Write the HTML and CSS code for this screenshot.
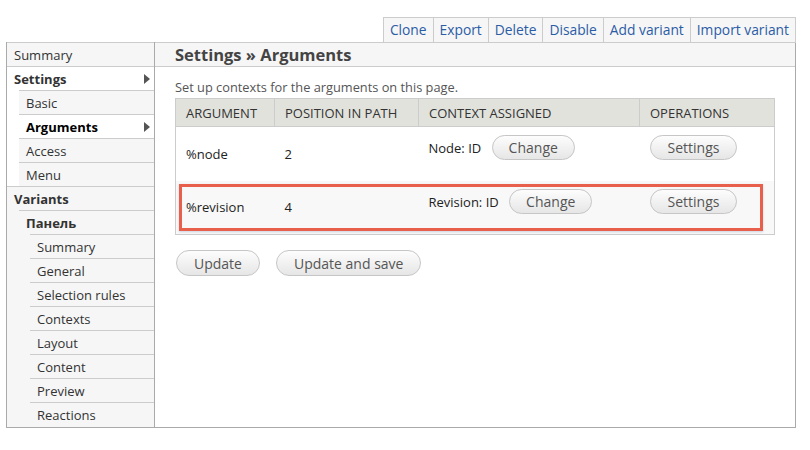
FILE: index.html
```html
<!DOCTYPE html>
<html lang="en">
<head>
<meta charset="UTF-8">
<title>Settings » Arguments</title>
<link rel="stylesheet" href="styles.css">
</head>
<body>
    <div class="page">
        <div class="tabs">
            <a class="tab" href="#">Clone</a>
            <a class="tab" href="#">Export</a>
            <a class="tab" href="#">Delete</a>
            <a class="tab" href="#">Disable</a>
            <a class="tab" href="#">Add variant</a>
            <a class="tab" href="#">Import variant</a>
        </div>
        <div class="layout">
            <ul class="nav">
                <li><a href="#">Summary</a></li>
                <li class="active"><a href="#" class="bold">Settings<span class="arrow"></span></a>
                    <ul>
                        <li><a href="#">Basic</a></li>
                        <li class="active"><a href="#" class="bold current">Arguments<span class="arrow"></span></a></li>
                        <li><a href="#">Access</a></li>
                        <li><a href="#">Menu</a></li>
                    </ul>
                </li>
                <li><a href="#" class="bold">Variants</a>
                    <ul>
                        <li><a href="#" class="bold">Панель</a>
                            <ul class="deep">
                                <li><a href="#">Summary</a></li>
                                <li><a href="#">General</a></li>
                                <li><a href="#">Selection rules</a></li>
                                <li><a href="#">Contexts</a></li>
                                <li><a href="#">Layout</a></li>
                                <li><a href="#">Content</a></li>
                                <li><a href="#">Preview</a></li>
                                <li><a href="#">Reactions</a></li>
                            </ul>
                        </li>
                    </ul>
                </li>
            </ul>
            <div class="main">
                <h2 class="title">Settings » Arguments</h2>
                <div class="content">
                    <p class="desc">Set up contexts for the arguments on this page.</p>
                    <div class="table-wrap">
                        <table class="args">
                            <tr>
                                <th class="c1">Argument</th>
                                <th class="c2">Position in path</th>
                                <th class="c3">Context assigned</th>
                                <th class="c4">Operations</th>
                            </tr>
                            <tr>
                                <td>%node</td>
                                <td>2</td>
                                <td class="top">Node: ID <button class="btn change">Change</button></td>
                                <td class="top"><button class="btn">Settings</button></td>
                            </tr>
                            <tr class="even">
                                <td>%revision</td>
                                <td>4</td>
                                <td class="top">Revision: ID <button class="btn change">Change</button></td>
                                <td class="top"><button class="btn">Settings</button></td>
                            </tr>
                        </table>
                        <div class="highlight"></div>
                    </div>
                    <div class="actions">
                        <button class="btn big">Update</button>
                        <button class="btn big">Update and save</button>
                    </div>
                </div>
            </div>
        </div>
    </div>
</body>
</html>
```
FILE: styles.css
```css
body {
    margin: 0;
    background: #fff;
    font-family: "Open Sans", "Liberation Sans", sans-serif;
    color: #333;
}
.page {
    padding: 17px 14px 0 6px;
}
.tabs {
    display: flex;
    justify-content: flex-end;
    height: 25px;
}
.tab {
    display: block;
    height: 24px;
    line-height: 24px;
    padding: 0 6px;
    border: 1px solid #ccc;
    border-right: none;
    background: #f6f6f6;
    color: #2b5ca6;
    font-size: 13.8px;
    text-decoration: none;
}
.tab:last-child {
    border-right: 1px solid #ccc;
}
.layout {
    display: flex;
    border: 1px solid #aaa;
    border-top: none;
    height: 385px;
}

/* left navigation */
.nav, .nav ul {
    list-style: none;
    margin: 0;
    padding: 0;
}
.nav {
    width: 149px;
    border-right: 1px solid #aaa;
    background: #f6f6f6;
}
.nav ul {
    padding-left: 12px;
}
.nav ul.deep {
    padding-left: 11px;
}
.nav li.active {
    background: #fff;
}
.nav li li {
    background: #f6f6f6;
}
.nav a {
    display: flex;
    align-items: center;
    height: 23px;
    border-top: 1px solid #ccc;
    padding-left: 7px;
    padding-right: 4px;
    font-size: 13px;
    line-height: 22px;
    color: #333;
    text-decoration: none;
}
.nav a.bold {
    font-weight: bold;
}
.nav a.current {
    color: #000;
}
.arrow {
    margin-left: auto;
    width: 0;
    height: 0;
    border-top: 5px solid transparent;
    border-bottom: 5px solid transparent;
    border-left: 6px solid #555;
}

/* main column */
.main {
    flex: 1;
}
.title {
    margin: 0;
    height: 23px;
    line-height: 23px;
    border-top: 1px solid #ccc;
    border-bottom: 1px solid #ccc;
    background: #f6f6f6;
    padding-left: 20px;
    font-size: 16.5px;
    color: #444;
}
.content {
    padding: 10px 20px 0 20px;
}
.desc {
    margin: 0 0 1px 0;
    font-size: 12.8px;
    color: #555;
    line-height: 20px;
}
.table-wrap {
    position: relative;
}
.args {
    width: 600px;
    border-collapse: collapse;
    border: 1px solid #ccc;
    font-size: 13px;
}
.args th {
    height: 27px;
    background: #e1e2dc;
    border-right: 1px solid #ccc;
    border-bottom: 1px solid #ccc;
    text-align: left;
    text-transform: uppercase;
    font-weight: normal;
    padding: 0 10px;
    color: #333;
}
.args .c1 { width: 78px; }
.args .c2 { width: 123px; }
.args .c3 { width: 200px; }
.args td {
    height: 54px;
    padding: 0 10px;
    color: #222;
    vertical-align: middle;
    box-sizing: border-box;
}
.args td.top {
    vertical-align: top;
    padding-top: 8px;
}
.args tr.even td {
    background: #f8f8f8;
}
.highlight {
    position: absolute;
    left: 4px;
    top: 86px;
    width: 578px;
    height: 41px;
    border: 3px solid #e8604c;
    box-shadow: 0 1px 2px rgba(80, 100, 160, 0.25);
}
.btn {
    font-family: inherit;
    font-size: 14px;
    color: #555;
    height: 25px;
    padding: 0 17px;
    border: 1px solid #c6c6c6;
    border-radius: 13px;
    background: linear-gradient(#fdfdfd, #e6e6e6);
}
.btn.change {
    padding: 0 16px;
    margin-left: 7px;
}
.actions {
    display: flex;
    gap: 15px;
    margin-top: 15px;
}
.btn.big {
    height: 26px;
    margin-left: 1px;
    padding: 0 17px;
}
```
